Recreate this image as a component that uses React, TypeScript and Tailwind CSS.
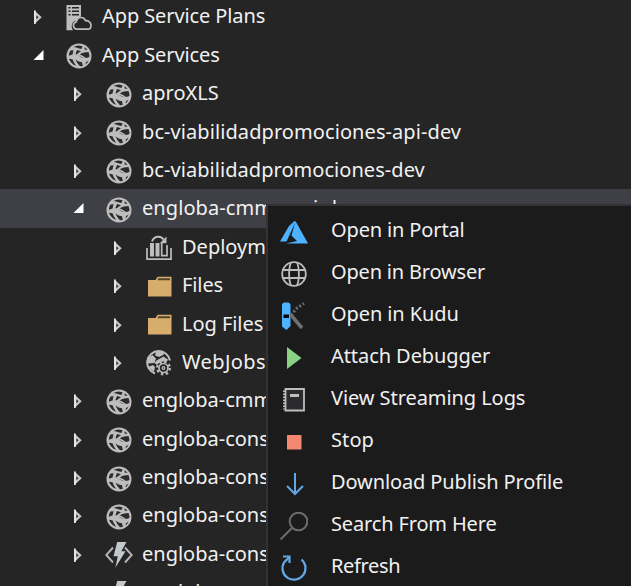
import React from 'react';

function Globe() {
  return (
    <svg width="26" height="26" viewBox="0 0 26 26">
      <circle cx="13" cy="13" r="12.500" fill="#bdbdbd" />
      <g fill="#2b2b2c">
        <path d="M4.500 7.500 7.500 7.300 6.500 11.500 2.800 12.800Q3 9.500 4.500 7.500z" />
        <path d="M7.500 4Q10 2.500 12.500 2.500L16.500 3.300 15.500 6 11.500 5 9.500 4.200z" />
        <path d="M11 7 15 8.200Q12.500 9.500 10.500 11.500L9.500 11z" />
        <path d="M18.500 4 21.500 6.700 18.800 6.800z" />
        <path d="M12.500 12.500Q15 10 18 9.500L22.500 9 23.500 12.500 23.300 14 20.500 15Q18.500 13.500 16.500 15z" />
        <path d="M3 15.800 6.500 16.300Q7.500 19.500 10 22.800 4.800 21 3 15.800z" />
        <path d="M9.500 16.500Q12.500 19 16 19.200L16.800 23 14 23.300Q11 20.500 9.500 16.500z" />
        <path d="M20 19.300 22.500 17.500Q21.500 20 19.500 21.500z" />
      </g>
      <path d="M12.500 11.500 18 14.500" stroke="#bdbdbd" strokeWidth="1.500" />
    </svg>
  );
}

function Plans() {
  return (
    <svg width="26" height="26" viewBox="0 0 26 26" fill="none">
      <path d="M.500 0H15v11.200c-2 .7-3.300 2-3.700 4.300-3.600.4-5.600 2.400-5.600 5.500 0 1.600.5 2.900 1.400 4.200H.500z" fill="#bdbdbd" />
      <path d="M2.500 2.700h2m1.500 0h7M2.500 6.200h2m1.500 0h7M2.500 9.700h2m1.500 0h7" stroke="#252526" strokeWidth="1.500" />
      <path d="M10.500 24.200a3.700 3.700 0 0 1-.4-7.200c.8-3 3-4.800 5.400-4.500 2 .2 3.400 1.300 4 3.200 3-.3 5.500 1.700 5.500 4.500 0 2.300-1.300 4-3 4z" stroke="#bdbdbd" strokeWidth="1.700" />
    </svg>
  );
}

function Deploy() {
  return (
    <svg width="26" height="26" viewBox="0 0 26 26" fill="none" stroke="#bdbdbd">
      <path d="M1 13v11.200h24V13" strokeWidth="1.700" />
      <path d="M4 8h4v13.500H4zM9.500 8h4v13.500h-4z" fill="#bdbdbd" stroke="none" />
      <path d="M15.700 8v12.700h5.300V10" strokeWidth="1.700" />
      <path d="M6 6.500C8 1 14.500.2 17.500 4.500" strokeWidth="2" />
      <path d="M20.500 1.500v6.700h-6.700z" fill="#bdbdbd" stroke="none" />
    </svg>
  );
}

function Folder() {
  return (
    <svg width="26" height="26" viewBox="0 0 26 26">
      <path d="M2 6h7.500l2-3.200H25.500v19.700H2z" fill="#d8ac6a" />
      <path d="M12.500 4.300H24v2H11.300z" fill="#51452f" />
    </svg>
  );
}

function WebJobs() {
  return (
    <svg width="26" height="26" viewBox="0 0 26 26" fill="none" stroke="#bdbdbd">
      <path d="M24 10.500A11.500 11.500 0 1 0 9 23.500" strokeWidth="2" />
      <path d="M10 1.500h7l1 3-5 2.500-4-1.500zM2 8l4.500-3L10 8.500 8.500 13 2 13.500zM10.500 10.500 17.500 6.500l5 3.500-3 1.500h-5L11 15l-2.500-2zM2 17l5-2 2 2-1 5z" fill="#bdbdbd" stroke="none" />
      <circle cx="17.500" cy="18" r="4.500" strokeWidth="1.700" />
      <circle cx="17.500" cy="18" r="6.300" strokeWidth="2.300" strokeDasharray="2.400 2.548" />
      <circle cx="17.500" cy="18" r="1.300" strokeWidth="1.300" />
    </svg>
  );
}

function FunctionApp() {
  return (
    <svg width="28" height="28" viewBox="0 0 28 28" fill="none">
      <path d="M8 6.500 1.300 14 8 21.500M20 6.500 26.700 14 20 21.500" stroke="#b5b5b5" strokeWidth="1.900" />
      <path d="M12.200 1h9.300l-5.200 9.200h4.200L10.300 26.800l2.500-11.500H8.500z" fill="#c3c8cb" />
    </svg>
  );
}

function Arrow({ open }: { open?: boolean }) {
  return open ? (
    <svg width="12" height="16" viewBox="0 0 12 16"><path d="M10.500 2V12H.500z" fill="#fff" /></svg>
  ) : (
    <svg width="12" height="16" viewBox="0 0 12 16">
      <path d="M1.200 1.200v14L8.700 8.200z" fill="#c9c9c9" />
      <path d="M1.200 1.500h1.500v13.400H1.200z" fill="#f4f4f4" />
      <path d="M3.300 6.300v4L5.500 8.300z" fill="#2d2d2d" />
    </svg>
  );
}

type Row = { level: string; icon: () => React.ReactElement; label: string; open?: boolean; selected?: boolean; spacing?: string };

const rows: Row[] = [
  { level: 'pl-[33px]', icon: Plans, label: 'App Service Plans', spacing: 'tracking-[-0.1px]' },
  { level: 'pl-[33px]', icon: Globe, label: 'App Services', open: true, spacing: 'tracking-[-0.1px]' },
  { level: 'pl-[73px]', icon: Globe, label: 'aproXLS' },
  { level: 'pl-[73px]', icon: Globe, label: 'bc-viabilidadpromociones-api-dev', spacing: 'tracking-[0.08px]' },
  { level: 'pl-[73px]', icon: Globe, label: 'bc-viabilidadpromociones-dev', spacing: 'tracking-[0.05px]' },
  { level: 'pl-[73px]', icon: Globe, label: 'engloba-cmms-api-dev', open: true, selected: true, spacing: 'tracking-[0.08px]' },
  { level: 'pl-[113px]', icon: Deploy, label: 'Deployments' },
  { level: 'pl-[113px]', icon: Folder, label: 'Files', spacing: 'tracking-[-0.1px]' },
  { level: 'pl-[113px]', icon: Folder, label: 'Log Files', spacing: 'tracking-[-0.05px]' },
  { level: 'pl-[113px]', icon: WebJobs, label: 'WebJobs', spacing: 'tracking-[0.4px]' },
  { level: 'pl-[73px]', icon: Globe, label: 'engloba-cmms-dev' },
  { level: 'pl-[73px]', icon: Globe, label: 'engloba-cons' },
  { level: 'pl-[73px]', icon: Globe, label: 'engloba-cons' },
  { level: 'pl-[73px]', icon: Globe, label: 'engloba-cons' },
  { level: 'pl-[73px]', icon: FunctionApp, label: 'engloba-cons' },
  { level: 'pl-[73px]', icon: FunctionApp, label: 'engloba-cons' },
];

const menu: { label: string; spacing: string; icon: React.ReactElement }[] = [
  {
    label: 'Open in Portal',
    spacing: 'tracking-[-0.14px]',
    icon: (
      <g fill="#4db2ff">
        <path d="M14.500 3 9 8 0 23.500h6.500L15.500 4z" />
        <path d="M15.500 3 28 25.500H6l11-2.500-5.500-5.500z" />
      </g>
    ),
  },
  {
    label: 'Open in Browser',
    spacing: 'tracking-[-0.18px]',
    icon: (
      <g fill="none" stroke="#bdbdbd" strokeWidth="1.800">
        <circle cx="14" cy="14" r="11.800" />
        <path d="M2.500 10h23M2.500 18h23M11 2.500C8.500 8 8.500 20 11 25.500M17 2.500c2.500 5.500 2.500 17.500 0 23" />
      </g>
    ),
  },
  {
    label: 'Open in Kudu',
    spacing: 'tracking-[-0.1px]',
    icon: (
      <g>
        <path d="M2 2 4 .5h4.500L10.500 2v22L6.500 28 2 24.500z" fill="#4db2ff" />
        <path d="M3.500 12.500h5.500v3.500H3.500z" fill="#050505" />
        <path d="m11 13 11 13" stroke="#6f6f6f" strokeWidth="3.500" />
        <path d="m11 13 6-7 7-4.500" stroke="#6f6f6f" strokeWidth="3" strokeDasharray="2 2" fill="none" />
      </g>
    ),
  },
  { label: 'Attach Debugger', spacing: 'tracking-[-0.07px]', icon: <path d="M7 3v22l14.500-11z" fill="#89d185" /> },
  {
    label: 'View Streaming Logs',
    spacing: 'tracking-[-0.07px]',
    icon: (
      <g fill="none" stroke="#bdbdbd">
        <path d="M5.500 3h18.500v21.500H5.500z" fill="#2b2b2d" strokeWidth="1.800" />
        <path d="M4.500 4.500v19" strokeWidth="3" strokeDasharray="1.500 1.500" />
        <path d="M10 9.500h9" strokeWidth="3" />
      </g>
    ),
  },
  { label: 'Stop', spacing: 'tracking-[0.1px]', icon: <path d="M7 7h14.500v14.500H7z" fill="#f48771" /> },
  {
    label: 'Download Publish Profile',
    spacing: 'tracking-[-0.12px]',
    icon: <path d="M15 3v21M7 16l8 8 8-8" stroke="#62a8e5" strokeWidth="2" fill="none" />,
  },
  {
    label: 'Search From Here',
    spacing: 'tracking-[-0.15px]',
    icon: (
      <g stroke="#6c6c6c" strokeWidth="2" fill="none">
        <circle cx="18.500" cy="9.500" r="8.800" />
        <path d="M12 16 .5 27.500" />
      </g>
    ),
  },
  {
    label: 'Refresh',
    spacing: 'tracking-[-0.35px]',
    icon: (
      <g stroke="#62a8e5" strokeWidth="2.200" fill="none">
        <path d="M21.500 5.500A11.500 11.500 0 1 1 4 8.500L9 3.500" />
        <path d="M3 2.500h6.500V9" />
      </g>
    ),
  },
];

export default function App() {
  return (
    <div className="relative h-[586px] w-[631px] overflow-hidden bg-[#252526] font-['Noto_Sans','Open_Sans',sans-serif] text-[20px] text-[#f1f1f1]">
      <div className="-mt-[2.8px] flex flex-col">
        {rows.map(({ level, icon: Icon, label, open, selected, spacing }, i) => (
          <div key={i} className={`flex h-[38.4px] shrink-0 items-center ${level} ${selected ? 'bg-[#3f3f46]' : ''}`}>
            <span className="w-3 shrink-0 pt-0.5"><Arrow open={open} /></span>
            <span className="ml-5 flex w-7 shrink-0 justify-center pt-[3px]"><Icon /></span>
            <span className={`ml-[9px] whitespace-nowrap ${spacing ?? ''}`}>{label}</span>
          </div>
        ))}
      </div>
      <div className="absolute left-[266px] top-[204px] h-[400px] w-[380px] border-2 border-[#333337] bg-[#1b1b1c] pt-[3px]">
        {menu.map(({ label, icon, spacing }) => (
          <div key={label} className="flex h-[42px] items-center pl-3">
            <svg width="28" height="28" viewBox="0 0 28 28" className="mt-[3px] shrink-0">{icon}</svg>
            <span className={`ml-[23px] whitespace-nowrap ${spacing}`}>{label}</span>
          </div>
        ))}
      </div>
    </div>
  );
}
